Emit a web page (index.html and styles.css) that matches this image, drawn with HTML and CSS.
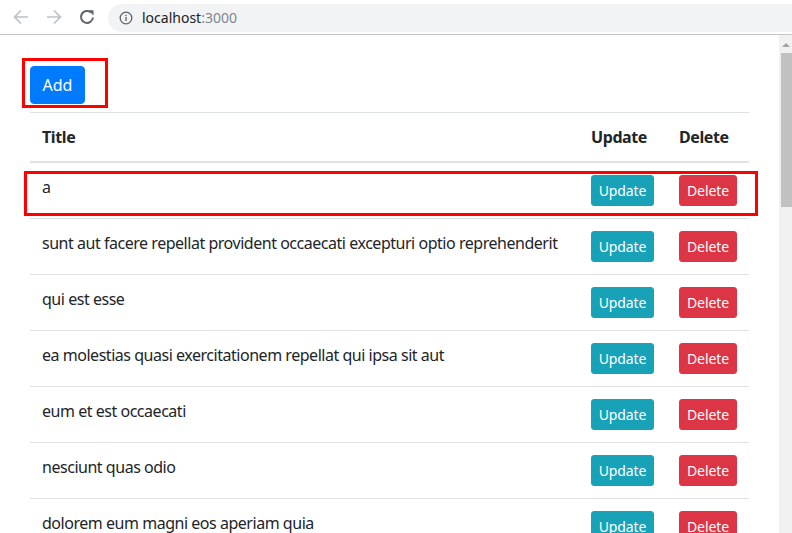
FILE: index.html
```html
<!DOCTYPE html>
<html>
<head>
<meta charset="utf-8">
<link rel="stylesheet" href="styles.css">
</head>
<body>
<div class="toolbar">
  <div class="navbtns">
    <svg class="nav dim" width="18" height="18" viewBox="0 0 18 18"><path d="M16 9H3M9 2.5L2.5 9 9 15.5" fill="none" stroke="currentColor" stroke-width="1.7"/></svg>
    <svg class="nav dim" width="18" height="18" viewBox="0 0 18 18"><path d="M2 9h13M9 2.5L15.5 9 9 15.5" fill="none" stroke="currentColor" stroke-width="1.7"/></svg>
    <svg class="nav" width="18" height="18" viewBox="0 0 18 18"><path d="M15 9.5a6 6 0 1 1-1.9-5" fill="none" stroke="currentColor" stroke-width="2"/><path d="M10.3 2.3h5.2v5.2z" fill="currentColor"/></svg>
  </div>
  <div class="omnibox">
    <svg class="info" width="14" height="14" viewBox="0 0 14 14"><circle cx="7" cy="7" r="5.8" fill="none" stroke="#5f6368" stroke-width="1.3"/><rect x="6.35" y="6" width="1.3" height="4" fill="#5f6368"/><rect x="6.35" y="3.8" width="1.3" height="1.3" fill="#5f6368"/></svg>
    <span class="host">localhost</span><span class="port">:3000</span>
  </div>
</div>
<div class="viewport">
  <div class="page">
    <div class="container">
      <button class="btn btn-primary">Add</button>
      <table class="table">
        <thead>
          <tr><th class="col-title">Title</th><th class="col-upd">Update</th><th class="col-del">Delete</th></tr>
        </thead>
        <tbody>
          <tr><td>a</td><td><button class="btn-sm btn-info">Update</button></td><td><button class="btn-sm btn-danger">Delete</button></td></tr>
          <tr><td>sunt aut facere repellat provident occaecati excepturi optio reprehenderit</td><td><button class="btn-sm btn-info">Update</button></td><td><button class="btn-sm btn-danger">Delete</button></td></tr>
          <tr><td>qui est esse</td><td><button class="btn-sm btn-info">Update</button></td><td><button class="btn-sm btn-danger">Delete</button></td></tr>
          <tr><td>ea molestias quasi exercitationem repellat qui ipsa sit aut</td><td><button class="btn-sm btn-info">Update</button></td><td><button class="btn-sm btn-danger">Delete</button></td></tr>
          <tr><td>eum et est occaecati</td><td><button class="btn-sm btn-info">Update</button></td><td><button class="btn-sm btn-danger">Delete</button></td></tr>
          <tr><td>nesciunt quas odio</td><td><button class="btn-sm btn-info">Update</button></td><td><button class="btn-sm btn-danger">Delete</button></td></tr>
          <tr><td>dolorem eum magni eos aperiam quia</td><td><button class="btn-sm btn-info">Update</button></td><td><button class="btn-sm btn-danger">Delete</button></td></tr>
          <tr><td>magnam facilis autem</td><td><button class="btn-sm btn-info">Update</button></td><td><button class="btn-sm btn-danger">Delete</button></td></tr>
        </tbody>
      </table>
    </div>
    <div class="mark mark-add"></div>
    <div class="mark mark-row"></div>
  </div>
  <div class="scrollbar">
    <div class="arrow"></div>
    <div class="thumb"></div>
  </div>
</div>
</body>
</html>
```
FILE: styles.css
```css
html, body {
  margin: 0;
  padding: 0;
  background: #fff;
  overflow: hidden;
  height: 533px;
}
body {
  font-family: "Noto Sans", "Open Sans", sans-serif;
  color: #212529;
}
.toolbar {
  height: 34px;
  border-bottom: 1px solid #c4c4c4;
  display: flex;
  align-items: center;
  background: #fff;
}
.navbtns {
  display: flex;
  gap: 15px;
  padding-left: 12px;
  width: 96px;
  align-items: center;
}
.nav { color: #5f6368; }
.nav.dim { color: #bdc1c6; }
.omnibox {
  flex: 1;
  height: 28px;
  margin-top: 1px;
  background: #f1f3f4;
  border-radius: 14px 0 0 14px;
  display: flex;
  align-items: center;
  padding-left: 11px;
  font-family: "Noto Sans", sans-serif;
  font-size: 14px;
}
.info { margin-right: 9px; }
.host { color: #202124; }
.port { color: #80868b; }

.viewport {
  display: flex;
  height: 498px;
}
.page {
  position: relative;
  width: 779px;
  overflow: hidden;
}
.container {
  width: 719px;
  margin-left: 30px;
  padding-top: 31px;
}
.btn {
  font-family: inherit;
  font-size: 16px;
  line-height: 24px;
  height: 38px;
  width: 55px;
  padding: 0;
  border: 1px solid transparent;
  border-radius: 4px;
  color: #fff;
  display: block;
}
.btn-primary { background: #007bff; border-color: #007bff; }
.table {
  margin-top: 8px;
  width: 719px;
  border-collapse: collapse;
  font-size: 16px;
  line-height: 24px;
}
.table th, .table td {
  padding: 12px;
  border-top: 1px solid #dee2e6;
  text-align: left;
  vertical-align: top;
}
.table thead th {
  border-bottom: 2px solid #dee2e6;
  font-weight: 700;
  letter-spacing: -0.4px;
}
.col-upd { width: 64px; }
.col-del { width: 57px; }
.table td {
  letter-spacing: -0.47px;
}
.btn-sm {
  font-family: inherit;
  font-size: 14px;
  line-height: 21px;
  height: 31px;
  padding: 0;
  border: 1px solid transparent;
  border-radius: 3px;
  color: #fff;
  display: block;
  letter-spacing: -0.1px;
}
.btn-info { background: #17a2b8; border-color: #17a2b8; width: 63px; }
.btn-danger { background: #dc3545; border-color: #dc3545; width: 58px; }
.mark {
  position: absolute;
  border: 3px solid #ff0000;
  box-sizing: border-box;
}
.mark-add { left: 22px; top: 23px; width: 86px; height: 50px; }
.mark-row { left: 24px; top: 136px; width: 734px; height: 45px; }
.scrollbar {
  width: 13px;
  background: #f1f1f1;
  position: relative;
}
.arrow {
  position: absolute;
  left: 3px;
  top: 8px;
  width: 0;
  height: 0;
  border-left: 4px solid transparent;
  border-right: 4px solid transparent;
  border-bottom: 4px solid #a3a3a3;
}
.thumb {
  position: absolute;
  left: 2px;
  right: 0;
  top: 18px;
  height: 154px;
  background: #c1c1c1;
}
```
